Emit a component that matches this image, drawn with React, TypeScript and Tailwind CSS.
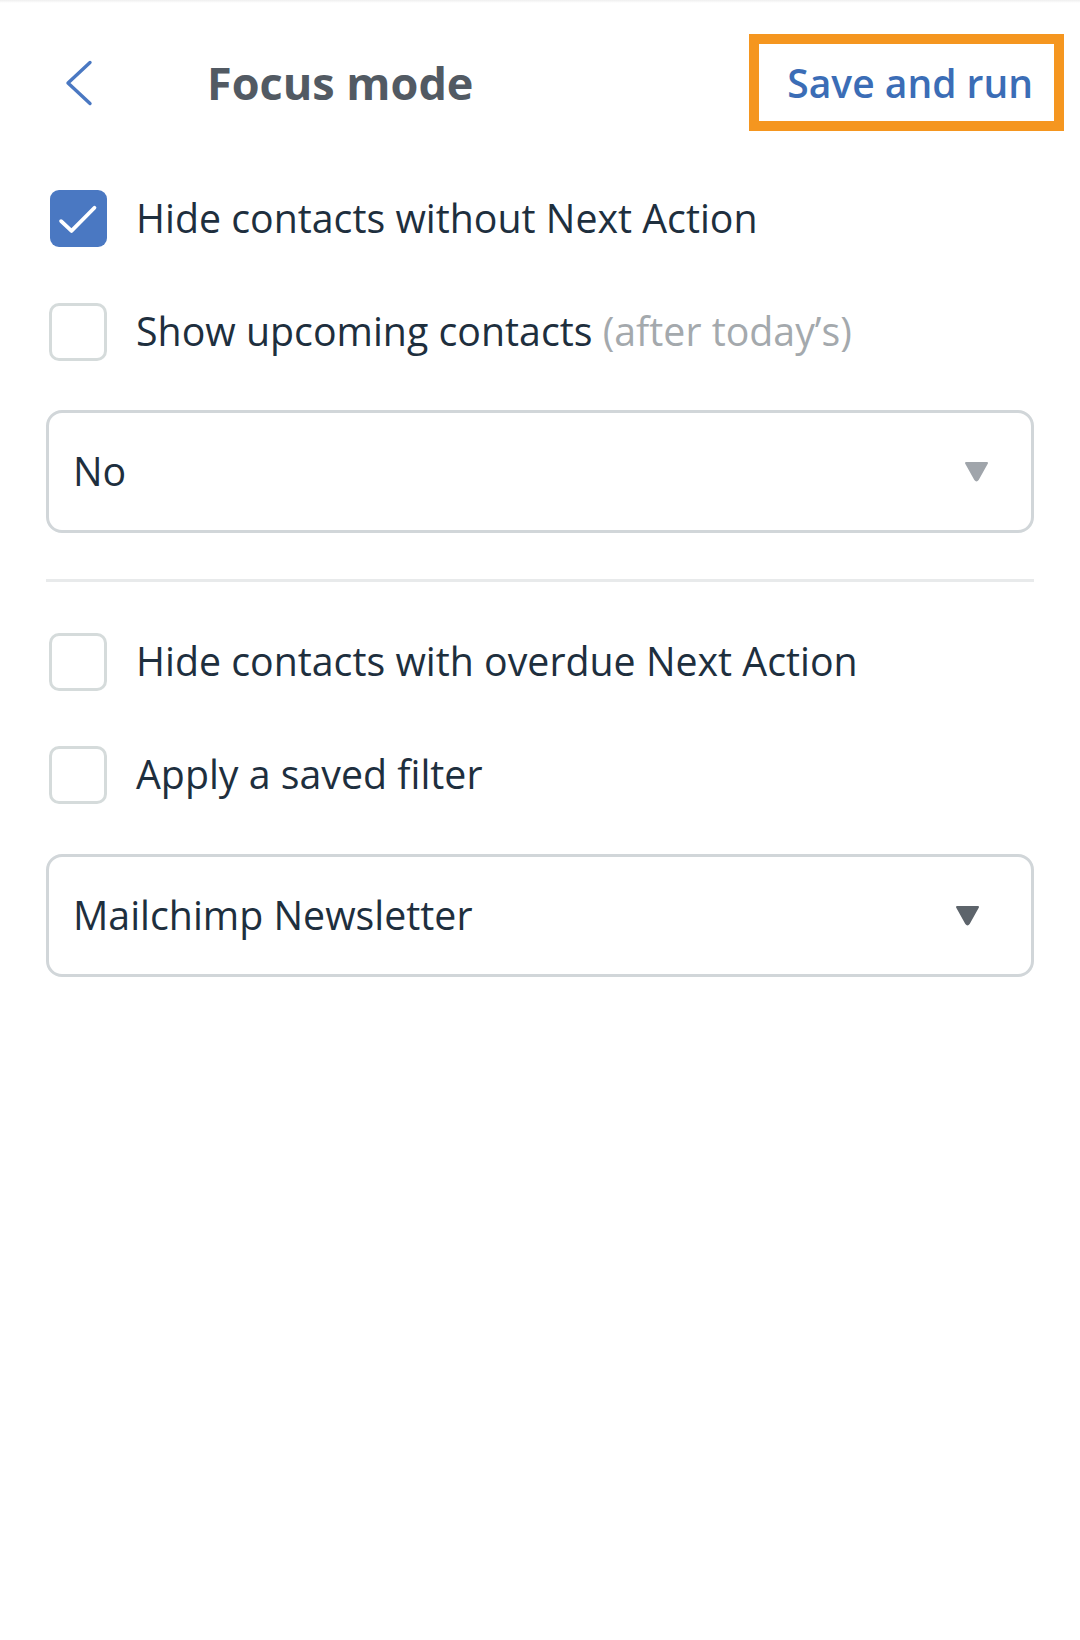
import React from "react";

function Checkbox({ checked }: { checked?: boolean }) {
  if (checked) {
    return (
      <div className="flex h-[57px] w-[57px] shrink-0 items-center justify-center overflow-hidden rounded-[9px] bg-[#4a78c2]">
        <svg width="52" height="52" viewBox="0 0 24 24" fill="none" className="shrink-0">
          <polyline points="4.2,13 9,17.5 19.6,6.8" stroke="#ffffff" strokeWidth="1.75" strokeLinecap="round" strokeLinejoin="round" />
        </svg>
      </div>
    );
  }
  return <div className="h-[58px] w-[58px] shrink-0 rounded-[10px] border-[3px] border-[#d5dbdb] bg-white" />;
}

function Row({ checked, children }: { checked?: boolean; children: React.ReactNode }) {
  return (
    <div className="flex h-[113px] items-center">
      <div className="ml-[3px] flex w-[58px] justify-center">
        <Checkbox checked={checked} />
      </div>
      <div className="ml-[29px] text-[39.3px] leading-none text-[#1e2f3e]">{children}</div>
    </div>
  );
}

function Select({ value, arrowColor, arrowRight }: { value: string; arrowColor: string; arrowRight: string }) {
  return (
    <div className={`flex h-[123px] items-center justify-between rounded-[16px] border-[3px] border-[#d1d6d9] pl-[24px] ${arrowRight}`}>
      <span className="text-[39.3px] leading-none text-[#1e2f3e]">{value}</span>
      <svg width="25" height="21" viewBox="0 0 25 21">
        <path d="M2 2 L23 2 L13.8 18.5 Q12.5 20.5 11.2 18.5 Z" fill={arrowColor} stroke={arrowColor} strokeWidth="2" strokeLinejoin="round" />
      </svg>
    </div>
  );
}

export default function App() {
  return (
    <div className="min-h-[1640px] w-[1080px] bg-white font-['Open_Sans',sans-serif]">
      <div className="h-[3px] bg-gradient-to-b from-[#efefef] to-white" />
      <div className="flex h-[159px] items-center">
        <div className="ml-[65px] flex w-[28px] justify-center">
          <svg width="28" height="46" viewBox="0 0 28 46" fill="none">
            <polyline points="25,2.5 3,23 25,43.5" stroke="#4a78c2" strokeWidth="3.4" strokeLinecap="round" strokeLinejoin="round" />
          </svg>
        </div>
        <div className="ml-[114px] text-[45px] font-bold leading-none text-[#525a63]">Focus mode</div>
        <div className="ml-auto mr-[16px] flex h-[97px] w-[315px] items-center justify-end border-[10px] border-[#f5961f] pr-[21px]">
          <span className="text-[39px] font-semibold leading-none text-[#3b6db6]">Save and run</span>
        </div>
      </div>
      <div className="px-[46px]">
        <Row checked>Hide contacts without Next Action</Row>
        <Row>
          Show upcoming contacts <span className="text-[#a4a9ad]">(after today’s)</span>
        </Row>
        <div className="mt-[22px]">
          <Select value="No" arrowColor="#a0a5ab" arrowRight="pr-[42px]" />
        </div>
        <div className="mt-[46px] h-[3px] bg-[#e8eaeb]" />
        <div className="mt-[23px]">
          <Row>Hide contacts with overdue Next Action</Row>
          <Row>Apply a saved filter</Row>
        </div>
        <div className="mt-[23px]">
          <Select value="Mailchimp Newsletter" arrowColor="#5d646b" arrowRight="pr-[51px]" />
        </div>
      </div>
    </div>
  );
}
